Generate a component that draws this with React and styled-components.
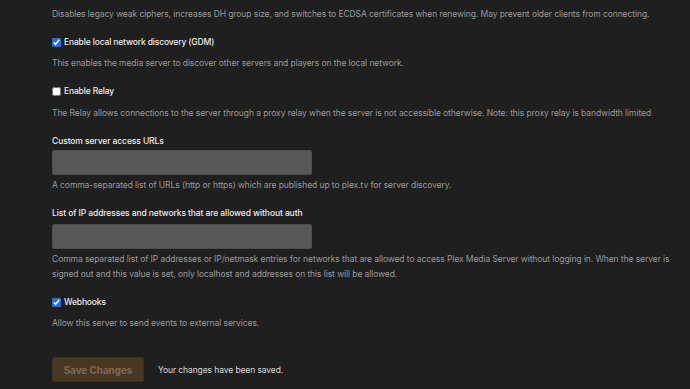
import React from "react";
import styled, { createGlobalStyle } from "styled-components";

const Global = createGlobalStyle`
  html, body { margin: 0; padding: 0; background: #1f1f1f; }
  body { font-family: Inter, "Noto Sans", sans-serif; -webkit-font-smoothing: antialiased; }
`;

const Page = styled.div`
  padding: 7px 0 0 52px;
  display: flex;
  flex-direction: column;
  gap: 13px;
  min-height: 389px;
  box-sizing: border-box;
`;

const Group = styled.div`
  display: flex;
  flex-direction: column;
  align-items: flex-start;
`;

const Desc = styled.p`
  margin: ${(p) => p.$top ?? 6}px 0 0;
  font-size: 8.5px;
  letter-spacing: -0.08px;
  line-height: 15px;
  color: #9a9a9a;
  max-width: 622px;
`;

const CheckRow = styled.label`
  display: flex;
  align-items: center;
  gap: 3px;
  font-size: 8.5px;
  letter-spacing: -0.15px;
  line-height: 15px;
  font-weight: 500;
  color: #ececec;
`;

const Box = styled.input.attrs({ type: "checkbox" })`
  width: 9px;
  height: 9px;
  margin: 0;
  accent-color: #1f6fe8;
`;

const Label = styled.div`
  font-size: 8.5px;
  letter-spacing: -0.1px;
  line-height: 15px;
  font-weight: 500;
  color: #ececec;
`;

const Field = styled.input`
  box-sizing: border-box;
  width: 260px;
  height: 25px;
  margin-top: ${(p) => p.$top ?? 1}px;
  background: #575757;
  border: 1px solid #4d4d4d;
  border-radius: 2px;
  outline: none;
`;

const Footer = styled.div`
  display: flex;
  align-items: center;
  gap: 14px;
  margin-top: 13px;
`;

const SaveButton = styled.button`
  box-sizing: border-box;
  width: 92px;
  height: 25px;
  background: #4a3722;
  border: 1px solid #3e2e1e;
  border-radius: 2px;
  color: #7a6a56;
  font-family: inherit;
  font-size: 10px;
  letter-spacing: -0.1px;
  font-weight: 700;
  padding: 0;
`;

const Status = styled.span`
  font-size: 8.5px;
  letter-spacing: -0.1px;
  color: #d8d8d8;
`;

export default function App() {
  return (
    <>
      <Global />
      <Page>
        <Desc $top={0}>
          Disables legacy weak ciphers, increases DH group size, and switches to ECDSA certificates when renewing. May prevent older clients from connecting.
        </Desc>
        <Group>
          <CheckRow>
            <Box defaultChecked />
            Enable local network discovery (GDM)
          </CheckRow>
          <Desc>This enables the media server to discover other servers and players on the local network.</Desc>
        </Group>
        <Group>
          <CheckRow>
            <Box />
            Enable Relay
          </CheckRow>
          <Desc $top={7}>
            The Relay allows connections to the server through a proxy relay when the server is not accessible otherwise. Note: this proxy relay is bandwidth limited
          </Desc>
        </Group>
        <Group>
          <Label>Custom server access URLs</Label>
          <Field />
          <Desc $top={3}>A comma-separated list of URLs (http or https) which are published up to plex.tv for server discovery.</Desc>
        </Group>
        <Group>
          <Label>List of IP addresses and networks that are allowed without auth</Label>
          <Field $top={3} />
          <Desc $top={3}>
            Comma separated list of IP addresses or IP/netmask entries for networks that are allowed to access Plex Media Server without logging in. When the server is signed out and this value is set, only localhost and addresses on this list will be allowed.
          </Desc>
        </Group>
        <Group>
          <CheckRow>
            <Box defaultChecked />
            Webhooks
          </CheckRow>
          <Desc>Allow this server to send events to external services.</Desc>
        </Group>
        <Footer>
          <SaveButton>Save Changes</SaveButton>
          <Status>Your changes have been saved.</Status>
        </Footer>
      </Page>
    </>
  );
}
